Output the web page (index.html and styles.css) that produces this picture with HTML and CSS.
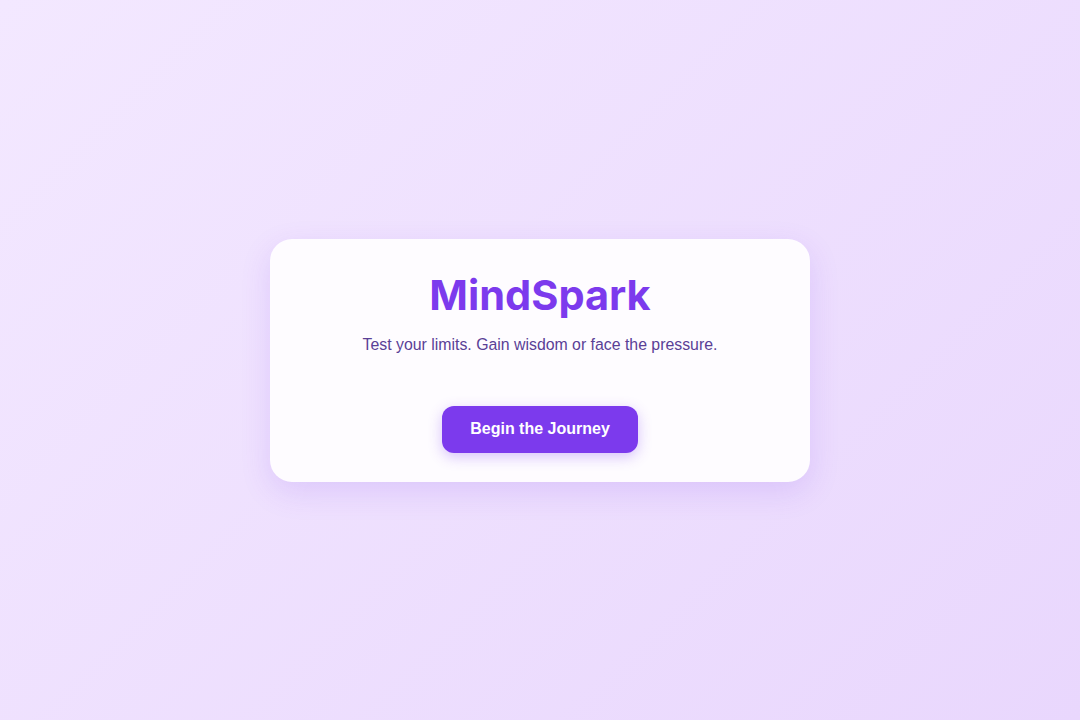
FILE: index.html
```html
<!DOCTYPE html>
<html>
<head>
<meta charset="utf-8">
<link rel="stylesheet" href="styles.css">
</head>
<body>
<main class="page">
  <section class="card">
    <h1 class="title">MindSpark</h1>
    <p class="subtitle">Test your limits. Gain wisdom or face the pressure.</p>
    <button class="start">Begin the Journey</button>
  </section>
</main>
</body>
</html>
```
FILE: styles.css
```css
html, body {
  margin: 0;
  padding: 0;
  height: 100%;
}
body {
  background: linear-gradient(135deg, #f3e8ff 0%, #e9d7fd 100%);
  font-family: "Liberation Sans", Arial, sans-serif;
}
.page {
  height: 100%;
  display: flex;
  align-items: center;
  justify-content: center;
}
.card {
  width: 540px;
  box-sizing: border-box;
  padding: 30px 40px 29px;
  background: #fefcff;
  border-radius: 22px;
  box-shadow: 0 10px 30px rgba(124, 58, 237, 0.15);
  text-align: center;
}
.title {
  margin: 0;
  font-family: Inter, sans-serif;
  font-weight: 700;
  font-size: 41.5px;
  line-height: 52px;
  color: #7c3aed;
}
.subtitle {
  margin: 12px 0 0;
  font-size: 15.85px;
  line-height: 24px;
  color: #5a4096;
}
.start {
  margin-top: 49px;
  width: 196px;
  height: 47px;
  border: none;
  border-radius: 12px;
  background: #7c3aed;
  color: #ffffff;
  font-family: "Liberation Sans", Arial, sans-serif;
  font-weight: 700;
  font-size: 16px;
  box-shadow: 0 4px 14px rgba(124, 58, 237, 0.3);
}
```
